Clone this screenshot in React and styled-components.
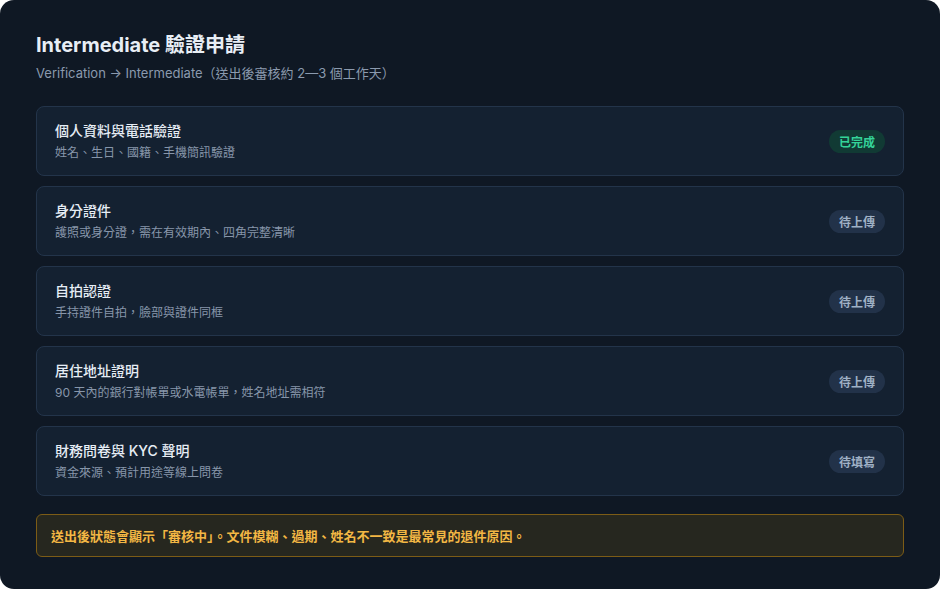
import React from "react";
import styled, { createGlobalStyle } from "styled-components";

const Global = createGlobalStyle`
  html, body { margin: 0; padding: 0; background: #ffffff; }
  body { font-family: Inter, "Noto Sans CJK TC", "Noto Sans", sans-serif; }
  * { box-sizing: border-box; }
`;

const Panel = styled.div`
  width: 940px;
  height: 589px;
  background: #0f1824;
  border-radius: 14px;
  padding: 30px 36px 32px;
  display: flex;
  flex-direction: column;
`;

const Title = styled.h1`
  margin: 0;
  font-size: 20px;
  line-height: 30px;
  font-weight: 700;
  color: #e8eef5;
`;

const Subtitle = styled.p`
  margin: 4px 0 0;
  font-size: 13px;
  line-height: 18px;
  color: #8b9aae;
`;

const List = styled.div`
  margin-top: 24px;
  display: flex;
  flex-direction: column;
  gap: 10px;
`;

const Row = styled.div`
  height: 70px;
  background: #142131;
  border: 1px solid #23344a;
  border-radius: 8px;
  padding: 0 18px;
  display: flex;
  align-items: center;
  justify-content: space-between;
`;

const Info = styled.div`
  display: flex;
  flex-direction: column;
  gap: 3px;
`;

const RowTitle = styled.div`
  font-size: 14px;
  line-height: 20px;
  font-weight: 500;
  color: #e6edf5;
`;

const RowDesc = styled.div`
  font-size: 12px;
  line-height: 17px;
  color: #8796aa;
`;

const Badge = styled.span`
  height: 23px;
  padding: 0 10px;
  border-radius: 999px;
  display: inline-flex;
  align-items: center;
  font-size: 12px;
  font-weight: 700;
  background: ${(p) => (p.$done ? "#113a34" : "#223249")};
  color: ${(p) => (p.$done ? "#34d399" : "#9fb0c5")};
`;

const Notice = styled.div`
  margin-top: 18px;
  height: 43px;
  background: #26271f;
  border: 1px solid #7c5c16;
  border-radius: 6px;
  padding: 0 14px;
  display: flex;
  align-items: center;
  font-size: 13px;
  font-weight: 700;
  color: #f3b744;
`;

const items = [
  { title: "個人資料與電話驗證", desc: "姓名、生日、國籍、手機簡訊驗證", status: "已完成", done: true },
  { title: "身分證件", desc: "護照或身分證，需在有效期內、四角完整清晰", status: "待上傳" },
  { title: "自拍認證", desc: "手持證件自拍，臉部與證件同框", status: "待上傳" },
  { title: "居住地址證明", desc: "90 天內的銀行對帳單或水電帳單，姓名地址需相符", status: "待上傳" },
  { title: "財務問卷與 KYC 聲明", desc: "資金來源、預計用途等線上問卷", status: "待填寫" },
];

export default function App() {
  return (
    <>
      <Global />
      <Panel>
        <Title>Intermediate 驗證申請</Title>
        <Subtitle>Verification → Intermediate（送出後審核約 2—3 個工作天）</Subtitle>
        <List>
          {items.map((it) => (
            <Row key={it.title}>
              <Info>
                <RowTitle>{it.title}</RowTitle>
                <RowDesc>{it.desc}</RowDesc>
              </Info>
              <Badge $done={it.done}>{it.status}</Badge>
            </Row>
          ))}
        </List>
        <Notice>送出後狀態會顯示「審核中」。文件模糊、過期、姓名不一致是最常見的退件原因。</Notice>
      </Panel>
    </>
  );
}
